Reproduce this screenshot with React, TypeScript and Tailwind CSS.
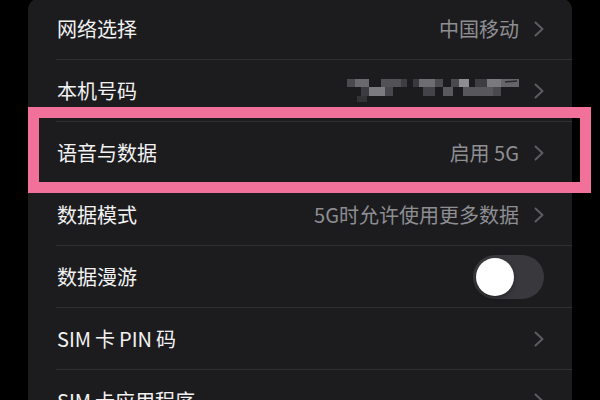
import type { ReactNode } from "react";

type Row = {
  label: string;
  value?: string;
  kind?: "chevron" | "masked" | "toggle";
};

const rows: Row[] = [
  { label: "网络选择", value: "中国移动" },
  { label: "本机号码", kind: "masked" },
  { label: "语音与数据", value: "启用 5G" },
  { label: "数据模式", value: "5G时允许使用更多数据" },
  { label: "数据漫游", kind: "toggle" },
  { label: "SIM\u2009卡\u2009PIN\u2009码" },
  { label: "SIM\u2009卡应用程序" },
];

// pixelated phone number: [x, y, w, h, fill]
const mosaic: [number, number, number, number, string][] = [
  [0, 0, 8, 8, "#4a4a4e"],
  [8, 0, 14, 8, "#6a6a6e"],
  [22, 8, 16, 9, "#7c7c80"],
  [14, 8, 8, 9, "#3c3c40"],
  [38, 8, 8, 9, "#48484c"],
  [34, 0, 20, 8, "#525256"],
  [54, 0, 6, 8, "#3e3e42"],
  [66, 0, 6, 8, "#3a3a3e"],
  [72, 0, 16, 8, "#6e6e72"],
  [76, 8, 12, 9, "#444448"],
  [88, 0, 8, 8, "#4c4c50"],
  [96, 8, 10, 9, "#5a5a5e"],
  [104, 0, 8, 8, "#4a4a4e"],
  [112, 0, 10, 8, "#8e8e92"],
  [116, 8, 30, 9, "#58585c"],
  [128, 0, 12, 8, "#3e3e42"],
  [140, 0, 14, 8, "#7a7a7e"],
  [154, 0, 18, 8, "#66666a"],
  [146, 8, 8, 9, "#4a4a4e"],
  [10, 17, 10, 6, "#333336"],
];

function Chevron() {
  return (
    <svg width="10" height="16" viewBox="0 0 10 16" fill="none" className="shrink-0">
      <path d="M1.5 1.5 L8.5 8 L1.5 14.5" stroke="#5c5c61" strokeWidth="2" strokeLinecap="round" strokeLinejoin="round" />
    </svg>
  );
}

function Masked() {
  return (
    <svg width="172" height="24" viewBox="0 0 172 24" className="mr-[15px]">
      {mosaic.map(([x, y, w, h, fill], i) => (
        <rect key={i} x={x} y={y} width={w} height={h} fill={fill} />
      ))}
      <path d="M158 3 L170 2" stroke="#2a2a2d" strokeWidth="1.5" />
    </svg>
  );
}

function Toggle() {
  return (
    <div className="flex h-[44px] w-[71px] items-center rounded-full bg-[#39393d] px-[3px]">
      <div className="h-[38px] w-[38px] rounded-full bg-white shadow-[0_2px_4px_rgba(0,0,0,0.35)]" />
    </div>
  );
}

function SettingRow({ row }: { row: Row }) {
  let right: ReactNode = null;
  if (row.kind === "toggle") {
    right = <Toggle />;
  } else {
    right = (
      <div className="flex items-center">
        {row.kind === "masked" ? (
          <Masked />
        ) : row.value ? (
          <span className="mr-[15px] text-[20px] leading-[28px] text-[#8e8e93]">{row.value}</span>
        ) : null}
        <Chevron />
      </div>
    );
  }

  return (
    <div className="ml-[28px] flex h-[62px] items-center justify-between border-b border-[#2f2f32] pr-[28px]">
      <span className="pl-px text-[20px] leading-[28px] text-[#f2f2f3]">{row.label}</span>
      {right}
    </div>
  );
}

export default function App() {
  return (
    <div className="relative h-[400px] w-[600px] overflow-hidden bg-black font-['Noto_Sans_CJK_SC','Noto_Sans',sans-serif]">
      <div className="ml-[28px] mt-[-2px] w-[544px] rounded-t-[12px] bg-[#1c1c1e]">
        {rows.map((row) => (
          <SettingRow key={row.label} row={row} />
        ))}
      </div>
      <div className="absolute left-[28px] top-[107px] h-[86px] w-[563px] border-[11px] border-[#f2719a]" />
    </div>
  );
}
